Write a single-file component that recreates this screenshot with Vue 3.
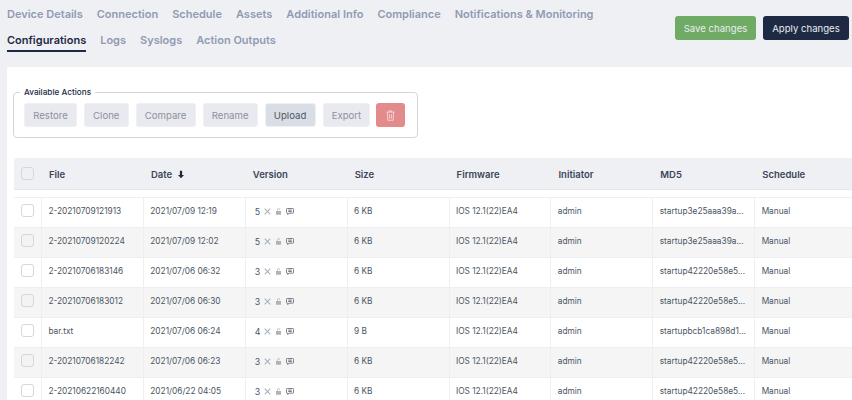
<template>
  <div class="page">
    <div class="top">
      <div class="tabs">
        <a v-for="tab in tabs" :key="tab" class="tab" :class="{ active: tab === 'Configurations' }">{{ tab }}</a>
      </div>
      <div class="top-buttons">
        <button class="btn-save">Save changes</button>
        <button class="btn-apply">Apply changes</button>
      </div>
    </div>

    <div class="panel">
      <fieldset class="actions">
        <legend>Available Actions</legend>
        <button v-for="a in actions" :key="a" class="action" :class="{ enabled: a === 'Upload' }">{{ a }}</button>
        <button class="action-delete">
          <svg width="9" height="11" viewBox="0 0 10 12" fill="none" stroke="#fff" stroke-opacity="0.6" stroke-width="1.1">
            <path d="M0.5 2.3h9M3.4 2.1V0.9h3.2v1.2M1.5 2.5l0.5 8.8h6l0.5-8.8M3.8 4.5v5M6.2 4.5v5" />
          </svg>
        </button>
      </fieldset>

      <div class="table">
        <div class="row head">
          <div class="cell check"><span class="box"></span></div>
          <div v-for="c in columns" :key="c" class="cell">
            {{ c }}
            <svg v-if="c === 'Date'" class="sort" width="6" height="9" viewBox="0 0 7 9" fill="#1e293b">
              <path d="M2.2 0h2.6v5.2H7L3.5 9 0 5.2h2.2z" />
            </svg>
          </div>
        </div>
        <div class="spacer"></div>
        <div v-for="(r, i) in rows" :key="i" class="row body" :class="{ odd: i % 2 === 1 }">
          <div class="cell check"><span class="box"></span></div>
          <div class="cell">{{ r.file }}</div>
          <div class="cell">{{ r.date }}</div>
          <div class="cell version">
            <span class="num">{{ r.version }}</span>
            <svg width="7" height="7" viewBox="0 0 8 8" stroke="#aeb2b9" stroke-width="1.3" fill="none">
              <path d="M0.8 0.8l6.4 6.4M7.2 0.8l-6.4 6.4" />
            </svg>
            <svg width="5" height="7" viewBox="0 0 6 8" fill="#aeb2b9">
              <path d="M0 3.5h6V8H0zM1.2 3.5V2a1.8 1.8 0 0 1 3.6 0v0.3H4V2a1 1 0 0 0-2 0v1.5z" />
            </svg>
            <svg width="8" height="7" viewBox="0 0 9 8" fill="none" stroke="#6f7580" stroke-width="1.1">
              <path d="M1.4 0.5h6.2a1 1 0 0 1 1 1v3.4a1 1 0 0 1-1 1H3.5L1.8 7.5V5.9h-0.4a1 1 0 0 1-1-1V1.5a1 1 0 0 1 1-1z" />
              <path d="M2.5 2.4h4M2.5 4h4" />
            </svg>
          </div>
          <div class="cell">{{ r.size }}</div>
          <div class="cell">IOS 12.1(22)EA4</div>
          <div class="cell">admin</div>
          <div class="cell">{{ r.md5 }}</div>
          <div class="cell">Manual</div>
        </div>
      </div>
    </div>
  </div>
</template>

<script setup>
const tabs = [
  'Device Details', 'Connection', 'Schedule', 'Assets', 'Additional Info', 'Compliance',
  'Notifications & Monitoring', 'Configurations', 'Logs', 'Syslogs', 'Action Outputs',
]
const actions = ['Restore', 'Clone', 'Compare', 'Rename', 'Upload', 'Export']
const columns = ['File', 'Date', 'Version', 'Size', 'Firmware', 'Initiator', 'MD5', 'Schedule']

const rows = [
  { file: '2-20210709121913', date: '2021/07/09 12:19', version: 5, size: '6 KB', md5: 'startup3e25aaa39a...' },
  { file: '2-20210709120224', date: '2021/07/09 12:02', version: 5, size: '6 KB', md5: 'startup3e25aaa39a...' },
  { file: '2-20210706183146', date: '2021/07/06 06:32', version: 3, size: '6 KB', md5: 'startup42220e58e5...' },
  { file: '2-20210706183012', date: '2021/07/06 06:30', version: 3, size: '6 KB', md5: 'startup42220e58e5...' },
  { file: 'bar.txt', date: '2021/07/06 06:24', version: 4, size: '9 B', md5: 'startupbcb1ca898d1...' },
  { file: '2-20210706182242', date: '2021/07/06 06:23', version: 3, size: '6 KB', md5: 'startup42220e58e5...' },
  { file: '2-20210622160440', date: '2021/06/22 04:05', version: 3, size: '6 KB', md5: 'startup42220e58e5...' },
]
</script>

<style>
html, body {
  margin: 0;
  overflow: hidden;
}
</style>

<style scoped>
.page {
  width: 852px;
  height: 400px;
  overflow: hidden;
  background: #eff0f4;
  font-family: Inter, sans-serif;
  color: #4b5563;
}

.top {
  display: flex;
  height: 67px;
  box-sizing: border-box;
  padding-left: 7px;
}

.tabs {
  width: 660px;
  display: flex;
  flex-wrap: wrap;
  column-gap: 14px;
  align-content: flex-start;
  padding-top: 6px;
}

.tab {
  height: 20px;
  line-height: 16px;
  margin-bottom: 6px;
  box-sizing: border-box;
  font-size: 11px;
  font-weight: 600;
  color: #8f9bb3;
  white-space: nowrap;
}

.tab.active {
  color: #1e2a44;
  border-bottom: 2px solid #1e2a44;
}

.top-buttons {
  display: flex;
  gap: 7px;
  margin-left: auto;
  padding: 16px 3px 0 0;
}

.top-buttons button {
  height: 24px;
  border: none;
  border-radius: 3px;
  font-family: inherit;
  font-size: 9.6px;
  padding: 0;
  color: #e8edf0;
}

.btn-save {
  width: 81px;
  background: #6fab64;
}

.btn-apply {
  width: 86px;
  background: #1e2a44;
}

.panel {
  background: #fff;
  margin-left: 7px;
  height: 333px;
  padding: 20px 0 0 6px;
  box-sizing: border-box;
  overflow: hidden;
}

.actions {
  width: 405px;
  min-width: 0;
  height: 51px;
  box-sizing: border-box;
  margin: 0;
  padding: 0 0 4px 10px;
  border: 1px solid #d3d5d9;
  border-radius: 4px;
  display: flex;
  align-items: center;
  gap: 7px;
}

legend {
  font-size: 8.2px;
  font-weight: 500;
  color: #1e2a44;
  padding: 0 4px;
  margin-left: -4px;
  line-height: 10px;
}

.action {
  height: 24px;
  padding: 0 8.2px;
  border: 1px solid #eef0f4;
  border-radius: 3px;
  background: #e8eaf0;
  color: #8c919b;
  font-family: inherit;
  font-size: 9.6px;
}

.action.enabled {
  background: #d9dde5;
  color: #4b5563;
}

.action-delete {
  width: 29px;
  height: 24px;
  margin-left: -1px;
  border: none;
  border-radius: 3px;
  background: #e28a8c;
  display: flex;
  align-items: center;
  justify-content: center;
  padding: 0;
}

.table {
  width: 843px;
  margin: 20px 0 0 1px;
}

.row {
  display: grid;
  grid-template-columns: 27px repeat(8, 101.9px);
}

.head {
  height: 32px;
  background: #eff0f4;
  border-bottom: 1px solid #e6e7eb;
  box-sizing: border-box;
  border-radius: 3px 3px 0 0;
  font-size: 9.5px;
  font-weight: 600;
  color: #3b4558;
}

.spacer {
  height: 7px;
}

.body {
  height: 30px;
  box-sizing: border-box;
  border-top: 1px solid #eeeff2;
  font-size: 8.3px;
  color: #4b5563;
}

.body.odd {
  background: #f5f5f6;
}

.cell {
  display: flex;
  align-items: center;
  padding-left: 6.4px;
  white-space: nowrap;
}

.body .cell {
  border-left: 1px solid #eeeff2;
  padding-bottom: 4px;
}

.head .cell {
  padding: 2px 0 0 8px;
}

.cell.check,
.head .cell.check {
  padding: 0 0 0 7px;
}

.body .cell.check {
  border-left: none;
  padding-bottom: 4px;
}

.box {
  width: 11px;
  height: 11px;
  border: 1px solid #d5d7dc;
  border-radius: 3px;
  background: #fff;
}

.odd .box {
  background: #f3f3f4;
}

.head .box {
  background: #eff0f4;
}

.sort {
  margin-left: 6px;
}

.body .version {
  gap: 5px;
  padding-left: 9px;
  padding-bottom: 3px;
}

.num {
  font-size: 8.8px;
  margin-right: -1px;
}
</style>
